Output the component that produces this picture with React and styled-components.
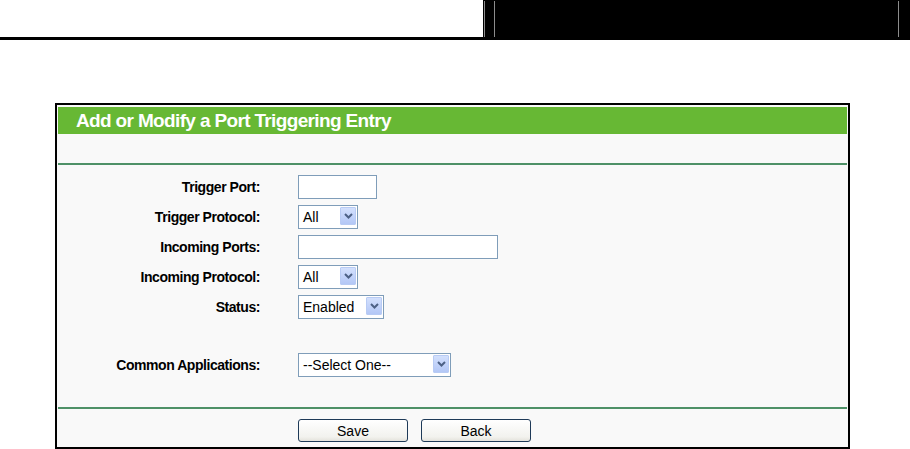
// Imports
import React from "react";
import styled, { createGlobalStyle } from "styled-components";

// Small pieces
const Select = ({ value, width }) => (
	<SelectBox $width={ width }>
		<SelectValue>{ value }</SelectValue>
		<ArrowBox>
			<svg width="9" height="6" viewBox="0 0 9 6">
				<polyline points="1,1 4.5,4.5 8,1" fill="none" stroke="#4d6185" strokeWidth="2" />
			</svg>
		</ArrowBox>
	</SelectBox>
);

const Row = ({ label, children, spaced }) => (
	<FormRow $spaced={ spaced }>
		<Label>{ label }</Label>
		<Control>{ children }</Control>
	</FormRow>
);

// Component
const App = () => {

	// Return
	return(
		<>
			<GlobalStyle />
			<TopBar>
				<TopLeft />
				<TopRight>
					<Divider $left="1px" />
					<Divider $left="9px" />
					<Divider $left="auto" $right="11px" />
				</TopRight>
			</TopBar>
			<Panel>
				<TitleBar>Add or Modify a Port Triggering Entry</TitleBar>
				<Spacer />
				<Rule />
				<Form>
					<Row label="Trigger Port:"><TextInput $width={ 79 } /></Row>
					<Row label="Trigger Protocol:"><Select value="All" width={ 60 } /></Row>
					<Row label="Incoming Ports:"><TextInput $width={ 200 } /></Row>
					<Row label="Incoming Protocol:"><Select value="All" width={ 60 } /></Row>
					<Row label="Status:"><Select value="Enabled" width={ 86 } /></Row>
					<Row label="Common Applications:" spaced><Select value="--Select One--" width={ 153 } /></Row>
				</Form>
				<Rule $top="30px" />
				<Actions>
					<Button>Save</Button>
					<Button>Back</Button>
				</Actions>
			</Panel>
		</>
	);

};

// Styled
const GlobalStyle = createGlobalStyle`
	body{
		margin: 0;
		background: #fff;
		font-family: "Liberation Sans", Arial, sans-serif;
	}
`;

const TopBar = styled.div`
	display: flex;
	height: 40px;
`;

const TopLeft = styled.div`
	width: 483px;
	box-sizing: border-box;
	border-bottom: 3px solid #000;
`;

const TopRight = styled.div`
	flex: 1;
	display: flex;
	align-items: flex-start;
	padding-top: 1px;
	background: #000;
`;

const Divider = styled.div`
	width: 1px;
	height: 36px;
	background: #8c8c8c;
	margin-left: ${ p => p.$left };
	margin-right: ${ p => p.$right || "0" };
`;

const Panel = styled.div`
	margin: 63px 0 0 55px;
	width: 795px;
	height: 346px;
	box-sizing: border-box;
	border: 2px solid #000;
	padding: 2px 1px 0;
	background: #f9f9f9;
`;

const TitleBar = styled.div`
	height: 27px;
	display: flex;
	align-items: center;
	padding-left: 18px;
	background: #67b834;
	color: #fff;
	font-size: 19px;
	letter-spacing: -0.65px;
	font-weight: bold;
`;

const Spacer = styled.div`
	height: 29px;
`;

const Rule = styled.div`
	height: 2px;
	margin-top: ${ p => p.$top || "0" };
	background: #4e9167;
`;

const Form = styled.div`
	display: flex;
	flex-direction: column;
	gap: 6px;
	padding-top: 10px;
`;

const FormRow = styled.div`
	display: flex;
	align-items: center;
	height: 24px;
	margin-top: ${ p => p.$spaced ? "28px" : "0" };
`;

const Label = styled.div`
	width: 202px;
	text-align: right;
	font-size: 14px;
	letter-spacing: -0.45px;
	font-weight: bold;
	color: #000;
`;

const Control = styled.div`
	margin-left: 38px;
	display: flex;
`;

const TextInput = styled.input`
	width: ${ p => p.$width }px;
	height: 24px;
	box-sizing: border-box;
	border: 1px solid #7f9db9;
	background: #fff;
	margin: 0;
	padding: 0 4px;
	font: inherit;
`;

const SelectBox = styled.div`
	width: ${ p => p.$width }px;
	height: 24px;
	box-sizing: border-box;
	display: flex;
	align-items: flex-start;
	border: 1px solid #7f9db9;
	background: #fff;
	font-size: 14px;
	color: #000;
`;

const SelectValue = styled.span`
	flex: 1;
	align-self: center;
	padding-left: 4px;
	white-space: nowrap;
`;

const ArrowBox = styled.span`
	width: 16px;
	height: 18px;
	margin: 1px 1px 0 0;
	box-sizing: border-box;
	display: flex;
	align-items: center;
	justify-content: center;
	border: 1px solid #b8cbf4;
	border-radius: 1px;
	background: linear-gradient(#d3e0fd, #b3c7f6);
`;

const Actions = styled.div`
	display: flex;
	gap: 13px;
	padding: 10px 0 0 240px;
`;

const Button = styled.button`
	width: 110px;
	height: 23px;
	margin: 0;
	padding: 0;
	border: 1px solid #1e3a58;
	border-radius: 3px;
	background: linear-gradient(#ffffff, #f2f2ee 80%, #e4e3dc);
	font-family: "Liberation Sans", Arial, sans-serif;
	font-size: 14px;
	color: #000;
`;

// Export
export default App;
